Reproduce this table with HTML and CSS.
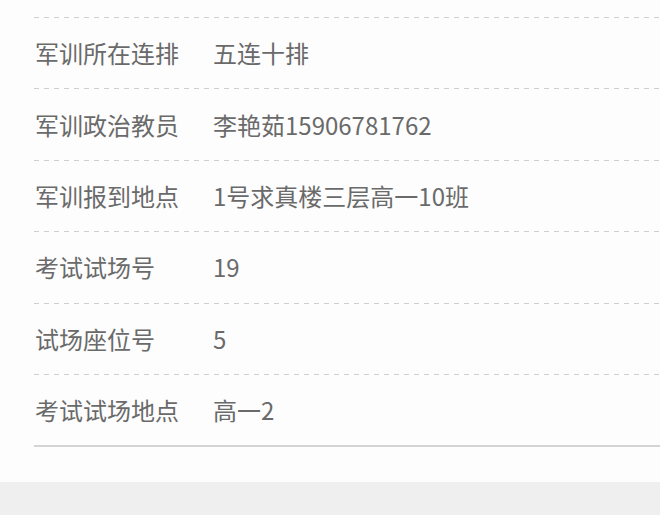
FILE: index.html
```html
<!DOCTYPE html>
<html lang="zh-CN">
<head>
  <meta charset="UTF-8" />
  <meta name="viewport" content="width=device-width, initial-scale=1.0"/>
  <title>新生信息</title>
  <link rel="stylesheet" href="styles.css">
</head>
<body>
  <!-- 信息卡片 -->
  <div class="info-card">
    <div class="info-list">
      <div class="info-row">
        <span class="info-label">军训所在连排</span>
        <span class="info-value">五连十排</span>
      </div>
      <div class="info-row">
        <span class="info-label">军训政治教员</span>
        <span class="info-value">李艳茹15906781762</span>
      </div>
      <div class="info-row">
        <span class="info-label">军训报到地点</span>
        <span class="info-value">1号求真楼三层高一10班</span>
      </div>
      <div class="info-row">
        <span class="info-label">考试试场号</span>
        <span class="info-value">19</span>
      </div>
      <div class="info-row">
        <span class="info-label">试场座位号</span>
        <span class="info-value">5</span>
      </div>
      <div class="info-row">
        <span class="info-label">考试试场地点</span>
        <span class="info-value">高一2</span>
      </div>
    </div>
  </div>
  <!-- 底部灰色区域 -->
  <div class="footer-space"></div>
</body>
</html>
```

FILE: styles.css
```css
/* Reinicio básico */
* {
  margin: 0;
  padding: 0;
  box-sizing: border-box;
}
html, body {
  width: 100%;
  height: 100%;
  overflow: hidden;
  background: #efefef;
  font-family: "Noto Sans CJK SC", "Noto Sans", sans-serif;
}

/* Tarjeta blanca */
.info-card {
  background: #fdfdfd;
  padding: 17px 0 35px 34px;
}

.info-list {
  border-bottom: 2px solid #d4d4d4;
}

/* Fila con línea discontinua arriba */
.info-row {
  display: flex;
  align-items: center;
  height: 71.4px;
  padding-left: 1px;
  background: repeating-linear-gradient(to right, #cfcfcf 0 5px, transparent 5px 10px) top left / 100% 1px no-repeat;
  font-size: 24px;
  color: #6a6a6a;
}

.info-label {
  width: 178px;
  flex-shrink: 0;
}

.footer-space {
  height: 40px;
}
```
